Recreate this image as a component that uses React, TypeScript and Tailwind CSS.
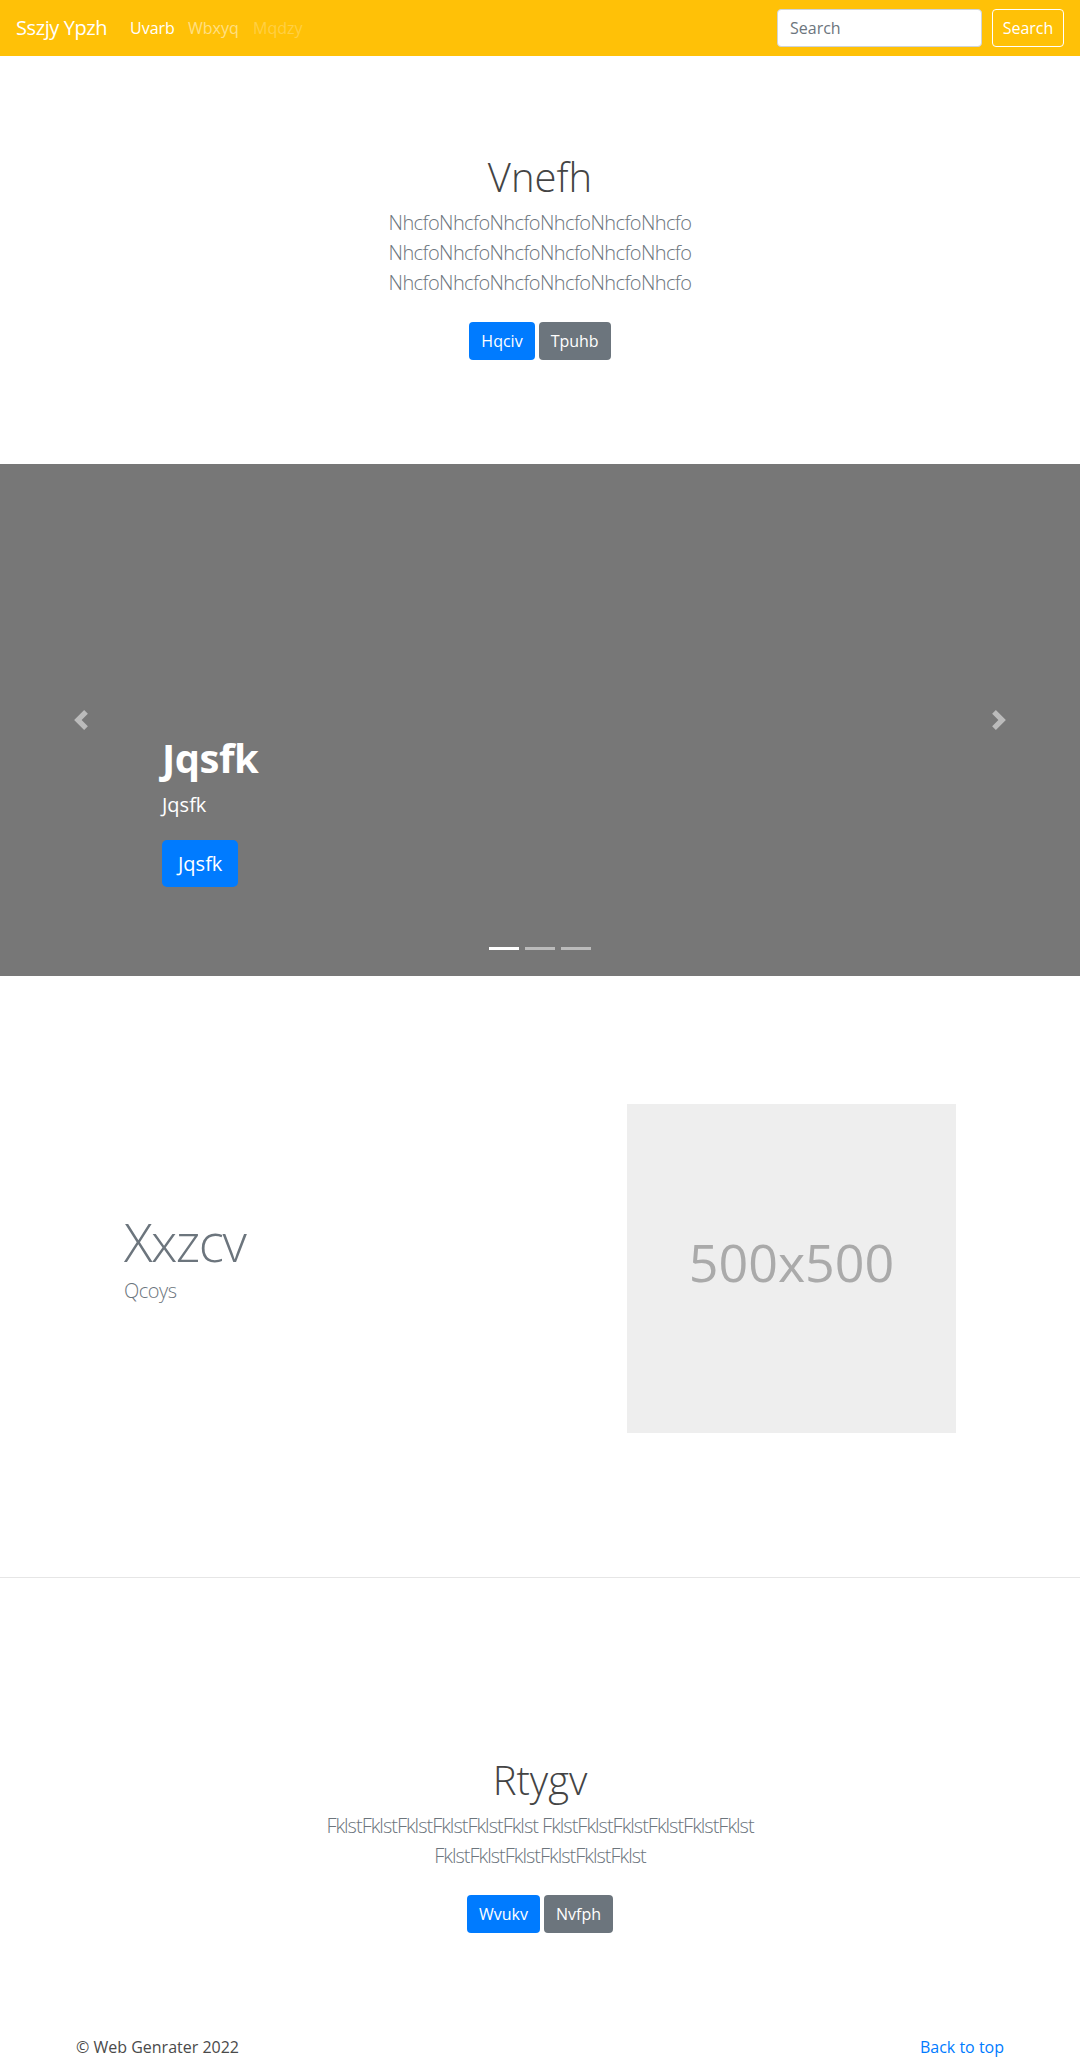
import React from "react";

const font = { fontFamily: '"Open Sans", "Noto Sans", Arial, sans-serif' };

function ChevronLeft() {
  return (
    <svg width="20" height="20" viewBox="0 0 8 8" fill="#fff">
      <path d="M5.25 0l-4 4 4 4 1.5-1.5L4.25 4l2.5-2.5L5.25 0z" />
    </svg>
  );
}
function ChevronRight() {
  return (
    <svg width="20" height="20" viewBox="0 0 8 8" fill="#fff">
      <path d="M2.75 0l-1.5 1.5L3.75 4l-2.5 2.5L2.75 8l4-4-4-4z" />
    </svg>
  );
}

export default function App() {
  return (
    <div className="w-[1080px] h-[2060px] overflow-hidden bg-white text-[#212529]" style={font}>
      {/* Navbar */}
      <nav className="h-[56px] bg-[#ffc107] flex items-center px-4">
        <div className="w-[114px] text-[20px] leading-[30px] tracking-[-0.4px] text-white whitespace-nowrap">Sszjy Ypzh</div>
        <div className="w-[58px] text-[16px] text-white">Uvarb</div>
        <div className="w-[65px] text-[16px] text-white/50">Wbxyq</div>
        <div className="text-[16px] text-white/25">Mqdzy</div>
        <div className="ml-auto flex items-center gap-[10px]">
          <input
            className="w-[205px] h-[38px] rounded-[4px] border border-[#ced4da] bg-white px-3 text-[16px] text-[#495057] placeholder:text-[#6c757d] outline-none"
            placeholder="Search"
            style={font}
          />
          <button className="w-[72px] h-[38px] rounded-[4px] border border-white text-white text-[16px]" style={font}>
            Search
          </button>
        </div>
      </nav>

      {/* Hero */}
      <section className="h-[408px] pt-[97px] text-center">
        <h1 className="text-[40px] leading-[48px] font-light text-[#444444] mb-[7px]">Vnefh</h1>
        <p className="mx-auto max-w-[460px] text-[20px] leading-[30px] tracking-[-0.6px] font-light text-[#6c757d]">
          NhcfoNhcfoNhcfoNhcfoNhcfoNhcfo NhcfoNhcfoNhcfoNhcfoNhcfoNhcfo NhcfoNhcfoNhcfoNhcfoNhcfoNhcfo
        </p>
        <div className="mt-[24px] flex justify-center gap-[4px]">
          <button className="h-[38px] px-3 rounded-[4px] bg-[#007bff] text-white text-[16px]">Hqciv</button>
          <button className="h-[38px] px-3 rounded-[4px] bg-[#6c757d] text-white text-[16px]">Tpuhb</button>
        </div>
      </section>

      {/* Carousel */}
      <section className="relative h-[512px] bg-[#777777] flex flex-col justify-end pl-[162px] pb-[89px] text-white">
        <h1 className="text-[40px] leading-[48px] font-bold tracking-[-0.5px] mb-[8px]">Jqsfk</h1>
        <p className="text-[20px] leading-[30px] mb-[20px]">Jqsfk</p>
        <div>
          <button className="h-[47px] px-4 rounded-[5px] bg-[#007bff] text-white text-[20px]">Jqsfk</button>
        </div>
        <div className="absolute left-0 top-0 h-full w-[15%] flex items-center justify-center opacity-50">
          <ChevronLeft />
        </div>
        <div className="absolute right-0 top-0 h-full w-[15%] flex items-center justify-center opacity-50">
          <ChevronRight />
        </div>
        <div className="absolute bottom-[26px] left-0 right-0 flex justify-center gap-[6px]">
          <span className="w-[30px] h-[3px] bg-white" />
          <span className="w-[30px] h-[3px] bg-white/50" />
          <span className="w-[30px] h-[3px] bg-white/50" />
        </div>
      </section>

      {/* Featurette */}
      <section className="h-[601px] flex items-start px-[124px] pt-[128px]">
        <div className="flex-1 pt-[106px]">
          <h2 className="text-[53px] leading-[64px] font-light tracking-[-1.5px] text-[#6c757d] mb-[2px]">Xxzcv</h2>
          <p className="text-[20px] leading-[30px] font-light tracking-[-0.5px] text-[#6c757d]">Qcoys</p>
        </div>
        <div className="w-[329px] h-[329px] bg-[#eeeeee] flex items-center justify-center pb-[14px]">
          <span className="text-[52px] text-[#aaaaaa]">500x500</span>
        </div>
      </section>

      <hr className="border-0 border-t border-[#e6e6e6]" />

      {/* Second hero */}
      <section className="pt-[178px] text-center">
        <h1 className="text-[40px] leading-[48px] font-light text-[#444444] mb-[7px]">Rtygv</h1>
        <p className="mx-auto max-w-[460px] text-[20px] leading-[30px] tracking-[-1px] font-light text-[#6c757d]">
          FklstFklstFklstFklstFklstFklst FklstFklstFklstFklstFklstFklst FklstFklstFklstFklstFklstFklst
        </p>
        <div className="mt-[24px] flex justify-center gap-[4px]">
          <button className="h-[38px] px-3 rounded-[4px] bg-[#007bff] text-white text-[16px]">Wvukv</button>
          <button className="h-[38px] px-3 rounded-[4px] bg-[#6c757d] text-white text-[16px]">Nvfph</button>
        </div>
      </section>

      {/* Footer */}
      <footer className="mt-[102px] mx-[76px] flex justify-between text-[16px] leading-[24px]">
        <p className="text-[#4a4a4a]">© Web Genrater 2022</p>
        <a className="text-[#007bff]" href="#">Back to top</a>
      </footer>
    </div>
  );
}
